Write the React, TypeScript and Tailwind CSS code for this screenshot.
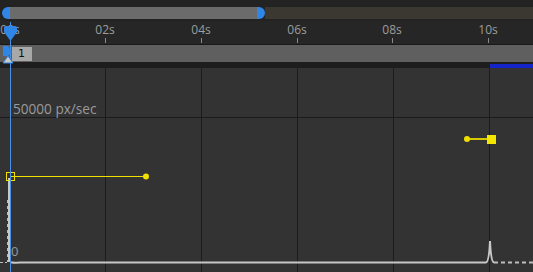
const ticks = [
  { label: "00s", x: 10 },
  { label: "02s", x: 105 },
  { label: "04s", x: 201 },
  { label: "06s", x: 297 },
  { label: "08s", x: 392 },
  { label: "10s", x: 488 },
];

function Playhead() {
  return (
    <div className="absolute top-0 left-0 w-full h-full pointer-events-none">
      <svg width="533" height="272" className="absolute top-0 left-0">
        <line x1="10.5" y1="22" x2="10.5" y2="272" stroke="#4a8fe0" strokeWidth="1" />
        <path d="M4 28 Q4 26 6 26 H15 Q17 26 17 28 V32 L10.5 41 L4 32 Z" fill="#2f86e6" />
        <path d="M3 46 H8 L12 52 L8 56 H3 Z" fill="#2f86e6" />
        <path d="M3 63 L8 56 L13 63 Z" fill="#c9c9c9" stroke="#2f86e6" strokeWidth="1" />
      </svg>
    </div>
  );
}

function Graph() {
  return (
    <svg width="533" height="204" className="block">
      <rect width="533" height="204" fill="#333333" />
      {[105, 201, 297, 393, 489].map((x) => (
        <line key={x} x1={x + 0.5} y1="0" x2={x + 0.5} y2="204" stroke="#1c1c1c" />
      ))}
      <line x1="0" y1="49.5" x2="533" y2="49.5" stroke="#1c1c1c" />
      {/* speed curve */}
      <path
        d="M9 194 L9 110 M11 194 Q12 195 20 194.5 L486 194.5 Q489 194 490 173 Q491 194 494 194.5"
        fill="none"
        stroke="#c8c8c8"
        strokeWidth="2"
      />
      <line x1="494" y1="194.5" x2="533" y2="194.5" stroke="#bdbdbd" strokeWidth="2" strokeDasharray="4 3" />
      <line x1="7.5" y1="132" x2="7.5" y2="194" stroke="#bdbdbd" strokeWidth="1" strokeDasharray="3 3" />
      <line x1="0" y1="194.5" x2="7" y2="194.5" stroke="#bdbdbd" strokeWidth="1" strokeDasharray="3 2" />
      {/* keyframe handles */}
      <line x1="10" y1="108.5" x2="146" y2="108.5" stroke="#f0e000" strokeWidth="1" />
      <rect x="6.5" y="104.5" width="8" height="8" fill="none" stroke="#f0e000" strokeWidth="1" />
      <circle cx="146" cy="108.5" r="3" fill="#f0e000" />
      <line x1="467" y1="71" x2="490" y2="71" stroke="#d8c800" strokeWidth="2" />
      <circle cx="467" cy="71" r="3" fill="#f0e000" />
      <rect x="487" y="67" width="9" height="9" fill="#f5e600" />
    </svg>
  );
}

export default function App() {
  return (
    <div className="w-[533px] h-[272px] bg-[#232323] relative overflow-hidden flex flex-col font-['Open_Sans',sans-serif]">
      <div className="h-[7px]" />
      <div className="h-[12px] flex items-stretch">
        <div className="w-[2px]" />
        <div className="w-[8px] bg-[#2f86e6] rounded-l-full" />
        <div className="w-[247px] bg-[#6b6b6b]" />
        <div className="w-[8px] bg-[#2f86e6] rounded-r-full" />
        <div className="flex-1 bg-[#3b3731]" />
      </div>
      <div className="h-[2px]" />
      <div className="h-[24px] bg-[#262626] relative">
        {ticks.map((t) => (
          <div key={t.label} className="absolute top-0 flex flex-col items-center" style={{ left: t.x - 15 }}>
            <span className="w-[30px] text-center text-[12px] leading-[17px] text-[#9d9d9d]">{t.label}</span>
            <span className="w-px h-[5px] bg-[#8a8a8a]" />
          </div>
        ))}
      </div>
      <div className="h-[18px] bg-[#5f5f5f] flex items-center border-t border-[#1a1a1a]">
        <div className="ml-[12px] h-[14px] w-[20px] bg-[#a8a8a8] text-[#111] text-[11px] leading-[14px] pl-[6px] font-['DejaVu_Sans',sans-serif]">
          1
        </div>
      </div>
      <div className="h-[6px] bg-[#1d1d1d] flex items-end justify-end">
        <div className="w-[43px] h-[4px] bg-[#1524c8]" />
      </div>
      <div className="relative flex-1">
        <Graph />
        <span className="absolute left-[13px] top-[31px] text-[13.6px] text-[#9a9a9a]">50000 px/sec</span>
        <span className="absolute left-[11px] top-[174px] text-[13px] text-[#9a9a9a]">0</span>
      </div>
      <Playhead />
    </div>
  );
}
